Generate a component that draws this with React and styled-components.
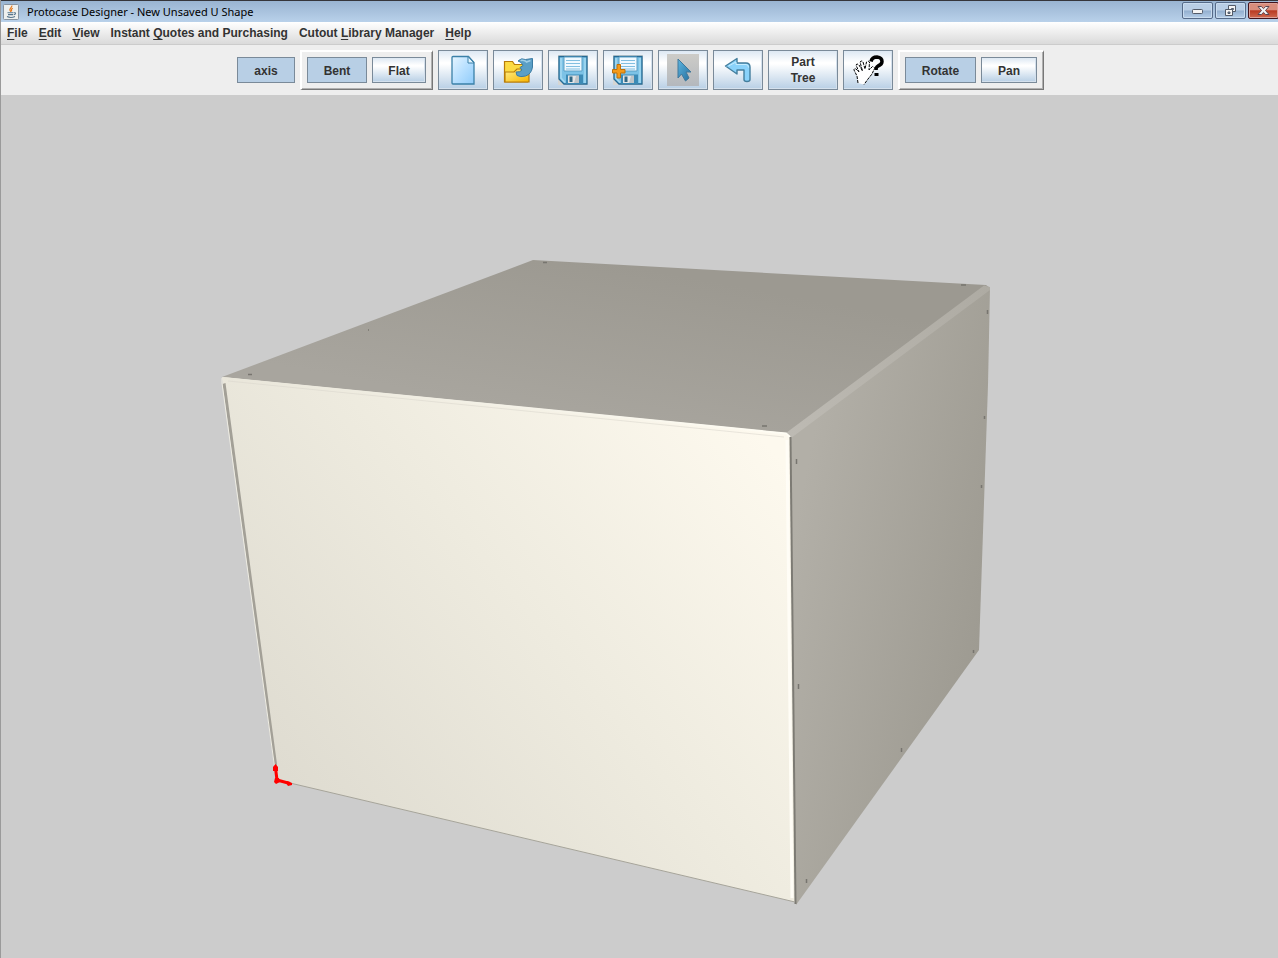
import React, { useState } from "react";
import styled, { createGlobalStyle, css } from "styled-components";

const GlobalStyle = createGlobalStyle`
  * { box-sizing: border-box; }
  html, body { margin: 0; padding: 0; }
  body { background: #cccccc; font-family: "Liberation Sans", Arial, sans-serif; }
`;

const Window = styled.div`
  display: flex;
  flex-direction: column;
  min-height: 100vh;
  border-left: 1px solid #9a9a9a;
  overflow: hidden;
`;

const TitleBar = styled.header`
  display: flex;
  align-items: center;
  height: 22px;
  padding-left: 2px;
  border-top: 1px solid #35353a;
  background: linear-gradient(#99b4d1, #b9d1ea);
`;

const Title = styled.h1`
  flex: 1;
  margin: 0 0 0 8px;
  font: 400 11px/20px "Noto Sans", sans-serif;
  color: #000;
  white-space: nowrap;
`;

const WindowControls = styled.div`
  display: flex;
  align-self: flex-start;
  gap: 2px;
  padding-top: 1px;
  margin-right: -1px;
`;

const WindowButton = styled.button`
  display: flex;
  align-items: center;
  justify-content: center;
  width: 31px;
  height: 17px;
  padding: 0;
  border: 1px solid #566b89;
  border-radius: 2px;
  box-shadow: inset 0 0 0 1px #c9dcef;
  background: linear-gradient(#b9cee5 48%, #93afcf 52%, #b4cde7);
  ${(p) => p.$close && css`
    border-color: #43141c;
    box-shadow: inset 0 0 0 1px #dda298;
    background: linear-gradient(#d98d7c 45%, #b93a22 52%, #cf6a50);
  `}
`;

const MenuBar = styled.nav`
  display: flex;
  align-items: center;
  gap: 11px;
  height: 23px;
  padding-left: 6px;
  border-bottom: 1px solid #cccccc;
  background: linear-gradient(#ffffff, #dadada);
`;

const MenuItem = styled.button`
  padding: 0;
  border: 0;
  background: none;
  font: 700 12px/20px "Liberation Sans", Arial, sans-serif;
  color: #333;
  white-space: nowrap;
`;

const Mnemonic = styled.span`
  text-decoration: underline;
  text-underline-offset: 2px;
`;

const Toolbar = styled.div`
  display: flex;
  align-items: center;
  justify-content: center;
  gap: 5px;
  height: 50px;
  padding-left: 2px;
  background: #eeeeee;
`;

const ToolButton = styled.button`
  display: flex;
  align-items: center;
  justify-content: center;
  width: ${(p) => p.$width || 50}px;
  height: ${(p) => (p.$small ? 26 : 40)}px;
  padding: ${(p) => (p.$small ? 2 : 0)}px 0 0;
  border: 1px solid #7a8a99;
  background: ${(p) =>
    p.$active ? "#b8cfe5" : "linear-gradient(#dde8f3, #ffffff 30%, #ffffff 34%, #b8cfe5)"};
  box-shadow: ${(p) => (p.$active ? "none" : "inset -1px -1px 0 #d5e1ed")};
  font: 700 12px/16px "Liberation Sans", Arial, sans-serif;
  color: #333;
`;

const ButtonGroup = styled.div`
  display: flex;
  align-items: center;
  gap: 5px;
  height: 40px;
  padding: 0 6px 1px 5px;
  border-style: solid;
  border-width: 2px 1px 1px 2px;
  border-color: #ffffff #777777 #777777 #ffffff;
  box-shadow: inset -1px -1px 0 #b0b0b0;
`;

const Viewport = styled.main`
  flex: 1;
  display: flex;
  background: #cccccc;
`;

const Scene = styled.svg`
  display: block;
  flex: 1;
  width: 100%;
`;

const JavaIcon = () => (
  <svg width="16" height="16" viewBox="0 0 16 16" aria-hidden="true">
    <rect x=".5" y=".5" width="15" height="15" rx="1" fill="#eef0ef" stroke="#8793a0" />
    <path d="M8.8 1.5c.6 2-2.6 2.7-1.9 4.6.2.7.9 1.2 1 1.9M9.8 4.2C8 5.1 8.2 6 8.8 7.2" fill="none" stroke="#e67b20" strokeWidth="1.2" />
    <path d="M4.5 8.7h6M5 10.6h5M4 12.6c2 .9 6 .8 8-.1M11 8.8c2-.5 2 1.5-.3 2" fill="none" stroke="#57758d" strokeWidth="1.1" />
  </svg>
);

const MinimizeIcon = () => (
  <svg width="12" height="9" viewBox="0 0 12 9" aria-hidden="true">
    <rect x=".5" y="3.5" width="10" height="4" rx=".8" fill="#f4f4f4" stroke="#535b69" />
  </svg>
);

const RestoreIcon = () => (
  <svg width="13" height="12" viewBox="0 0 13 12" aria-hidden="true">
    <path d="M4.500.500h7v6h-7z" fill="#f4f4f4" stroke="#535b69" />
    <path d="M7.500 3.500h2v1h-2z" fill="#7f9bb9" stroke="#535b69" />
    <path d="M1.500 4.500h7v6h-7z" fill="#f4f4f4" stroke="#535b69" />
    <path d="M4 7h2v1.500H4z" fill="#7f9bb9" stroke="#535b69" />
  </svg>
);

const CloseIcon = () => (
  <svg width="13" height="11" viewBox="0 0 13 11" aria-hidden="true">
    <path d="M1 1.500h3.300L6.500 3.600 8.700 1.500H12L8.500 5.500 12 9.500H8.700L6.500 7.400 4.300 9.500H1L4.500 5.500z" fill="#f4f4f4" stroke="#594550" strokeLinejoin="round" />
  </svg>
);

const NewIcon = () => (
  <svg width="32" height="32" viewBox="0 0 32 32" aria-hidden="true">
    <defs>
      <linearGradient id="sheet" x1="0" y1="0" x2="1" y2="1">
        <stop offset="0" stopColor="#e6f5ff" />
        <stop offset=".5" stopColor="#b8e0ff" />
        <stop offset="1" stopColor="#8fcbfa" />
      </linearGradient>
    </defs>
    <path d="M6 2.500h15.500l5.500 6V30H6q-1 0-1-1V3.500q0-1 1-1z" fill="url(#sheet)" stroke="#3a80a8" strokeWidth="1.300" />
    <path d="M21 2.500V9h6z" fill="#e4f5ff" stroke="#3a80a8" />
  </svg>
);

const OpenIcon = () => (
  <svg width="32" height="32" viewBox="0 0 32 32" aria-hidden="true">
    <defs>
      <linearGradient id="folder" x1="0" y1="0" x2="1" y2="1">
        <stop offset="0" stopColor="#fff08a" />
        <stop offset="1" stopColor="#f9b500" />
      </linearGradient>
    </defs>
    <path d="M2.500 28V7.500h8l2 3h13V28z" fill="#fddb42" stroke="#b87c08" strokeWidth="1.200" />
    <path d="M3 28V18h9l3-3h12v13z" fill="url(#folder)" stroke="#b87c08" strokeWidth="1.200" />
    <path d="M16 7q3-3.500 7.500-1.500L30.500 4.500V13q-1 7-7 9-5 1.500-8.500-.5l-1-3.500q4 .5 6-2L18 13.500l3-2q-1-3.500-5-4.500z" fill="#5b9fc6" stroke="#3b7ba3" strokeLinejoin="round" />
    <path d="M18.500 6.500q4-1 6 1.500l4-1.500" fill="none" stroke="#9fcee6" strokeWidth="1.500" />
  </svg>
);

const SaveIcon = ({ plus }) => (
  <svg width="32" height="32" viewBox="0 0 32 32" aria-hidden="true">
    <path d="M1 1h30v30H1z" fill="#d6d6d3" />
    <path d="M2 2.500h28V30H7l-5-5z" fill="#7cc2e6" stroke="#246a95" strokeWidth="1.300" />
    <path d="M4 4v20l4 4.500" fill="none" stroke="#a6daf2" strokeWidth="1.500" />
    <path d="M28 4v25" stroke="#a2d8f0" strokeWidth="1.500" />
    <path d="M7 3h18v14H7z" fill="#f0f9ff" stroke="#5a9fc4" />
    <path d="M9 6.500h14M9 9.500h14M9 12.500h14M9 15h14" stroke="#82bfe0" />
    <path d="M9 20.500h17V30H9z" fill="#3c8ab5" />
    <path d="M11 21.500h11V29H11z" fill="#e2e5e7" />
    <path d="M12.500 22.500h3V28h-3z" fill="#316783" />
    <path d="M19 22h3v7h-5z" fill="#bec4c8" />
    {plus && <path d="M5 10.500h3.500v5H13v3.500H8.500v5H5v-5H.5v-3.500H5z" fill="#f49a19" stroke="#be7108" />}
  </svg>
);

const SelectIcon = () => (
  <svg width="32" height="32" viewBox="0 0 32 32" aria-hidden="true">
    <defs>
      <linearGradient id="selectTile" x1="0" y1="0" x2="0" y2="1">
        <stop offset="0" stopColor="#cdccc8" />
        <stop offset="1" stopColor="#b4b8bd" />
      </linearGradient>
      <linearGradient id="pointer" x1="0" y1="0" x2="1" y2="1">
        <stop offset="0" stopColor="#5eb5e0" />
        <stop offset="1" stopColor="#246f9e" />
      </linearGradient>
    </defs>
    <path d="M0 0h32v32H0z" fill="url(#selectTile)" />
    <path d="M11 5l13 13h-5l3 6-3.500 3-4-7-3.500 4z" fill="url(#pointer)" stroke="#40789b" />
  </svg>
);

const UndoIcon = () => (
  <svg width="32" height="32" viewBox="0 0 32 32" aria-hidden="true">
    <path d="M3.500 12L15 4.500V9h9q4 0 4 4v12.500q0 2-3 2t-3-2V16h-7v4z" fill="#8ad2fa" stroke="#447e9d" strokeWidth="1.400" strokeLinejoin="round" />
    <path d="M6.500 12L14 8v2.500h10q2.500 0 2.500 3" fill="none" stroke="#c6edff" />
  </svg>
);

const HelpHandIcon = () => (
  <svg width="34" height="32" viewBox="0 0 34 32" aria-hidden="true">
    <path d="M20 7.500q1-4.500 6-4.500 5 .5 5 4.500 0 3-4 4.500-2 1-2 4" fill="none" stroke="#000" strokeWidth="3.500" />
    <path d="M23.500 19h4v3h-4z" fill="#000" />
    <path d="M7 29l-1-7-3-6q0-2 2-1l3 3-3-7q1-2 3 0l3.500 6L9 8q2-2 3 0l2 7 1.500-7q2-1.500 3 0L18 16l3.500-3.500q2 0 2 2L21 20l-4 5-4 5.500z" fill="#fff" />
    <path d="M7 29l-1-7-3-6q0-2 2-1l3 3-3-7q1-2 3 0l3.500 6L9 8q2-2 3 0l2 7 1.500-7q2-1.500 3 0L18 16l3.500-3.500q2 0 2 2L21 20l-4 5-4 5.500" fill="none" stroke="#000" strokeDasharray="3 1" />
  </svg>
);

const Enclosure = () => (
  <Scene viewBox="1 95 1277 863" preserveAspectRatio="xMidYMid meet" role="img" aria-label="U shape enclosure">
    <defs>
      <linearGradient id="topFace" x1="600" y1="260" x2="570" y2="420" gradientUnits="userSpaceOnUse">
        <stop offset="0" stopColor="#9c9991" />
        <stop offset="1" stopColor="#a8a59e" />
      </linearGradient>
      <linearGradient id="frontFace" x1="290" y1="780" x2="740" y2="410" gradientUnits="userSpaceOnUse">
        <stop offset="0" stopColor="#dfdcd1" />
        <stop offset=".5" stopColor="#eeebdf" />
        <stop offset="1" stopColor="#fdf9ee" />
      </linearGradient>
      <linearGradient id="sideFace" x1="790" y1="550" x2="990" y2="590" gradientUnits="userSpaceOnUse">
        <stop offset="0" stopColor="#b2afa7" />
        <stop offset="1" stopColor="#9e9b92" />
      </linearGradient>
      <linearGradient id="bendEdge" x1="790" y1="435" x2="990" y2="288" gradientUnits="userSpaceOnUse">
        <stop offset="0" stopColor="#bdbab3" />
        <stop offset="1" stopColor="#aeaba3" />
      </linearGradient>
      <linearGradient id="frontLip" x1="222" y1="0" x2="790" y2="0" gradientUnits="userSpaceOnUse">
        <stop offset="0" stopColor="#e9e6da" />
        <stop offset="1" stopColor="#fffdf4" />
      </linearGradient>
    </defs>
    <path d="M222 377L533 260 986 285 990 288 790 436z" fill="url(#topFace)" />
    <path d="M789 435L990 288 988 385 979 650 796 905z" fill="url(#sideFace)" />
    <path d="M786 433L984 285.500 990 287 990 290 791 438z" fill="url(#bendEdge)" />
    <path d="M222 377L786 433 790 437 795 902 277 780z" fill="url(#frontFace)" />
    <path d="M223 378L786 433.500 790 437" fill="none" stroke="url(#frontLip)" strokeWidth="2" />
    <path d="M228 381L784 437" fill="none" stroke="#d9d6cc" strokeOpacity=".55" />
    <path d="M787 440L792 898" fill="none" stroke="#fffdf6" strokeWidth="3" />
    <path d="M222.500 384L225.500 383 277 764 276 780 274 764z" fill="#a3a097" />
    <path d="M222 378L222 383 275 770" fill="none" stroke="#eeece2" />
    <path d="M790.500 437L795.500 904" fill="none" stroke="#7d7b74" strokeWidth="2" />
    <path d="M290 783L795 902" fill="none" stroke="#a6a49a" />
    <path d="M248 374.500h4M762 426h5M543 262.500h4M961 285h5M368 330h1M796.500 459v5M798.500 684v5M806.500 879v4M987.500 310v4M984.500 416v3M981.500 485v3M973.500 650v3M901.500 748v4" fill="none" stroke="#77756f" strokeWidth="1.500" />
    <path d="M275.500 768L277 780 290 783.500" fill="none" stroke="#f00" strokeWidth="3" />
    <path d="M275.500 764l2.500 3v4h-5v-4zM275 778h4l1 4-4 2-2-2zM287 781l5 2v2l-4 1-2-3z" fill="#f00" />
  </Scene>
);

const menus = [
  ["", "F", "ile"],
  ["", "E", "dit"],
  ["", "V", "iew"],
  ["Instant ", "Q", "uotes and Purchasing"],
  ["Cutout ", "L", "ibrary Manager"],
  ["", "H", "elp"],
];

export default function App() {
  const [axis, setAxis] = useState(true);
  const [shape, setShape] = useState("Bent");
  const [mode, setMode] = useState("Rotate");

  return (
    <Window>
      <GlobalStyle />
      <TitleBar>
        <JavaIcon />
        <Title>Protocase Designer - New Unsaved U Shape</Title>
        <WindowControls>
          <WindowButton aria-label="Minimize"><MinimizeIcon /></WindowButton>
          <WindowButton aria-label="Restore"><RestoreIcon /></WindowButton>
          <WindowButton $close aria-label="Close"><CloseIcon /></WindowButton>
        </WindowControls>
      </TitleBar>
      <MenuBar>
        {menus.map(([before, key, after]) => (
          <MenuItem key={before + key}>{before}<Mnemonic>{key}</Mnemonic>{after}</MenuItem>
        ))}
      </MenuBar>
      <Toolbar role="toolbar">
        <ToolButton $small $width={58} $active={axis} onClick={() => setAxis(!axis)}>axis</ToolButton>
        <ButtonGroup>
          <ToolButton $small $width={60} $active={shape === "Bent"} onClick={() => setShape("Bent")}>Bent</ToolButton>
          <ToolButton $small $width={54} $active={shape === "Flat"} onClick={() => setShape("Flat")}>Flat</ToolButton>
        </ButtonGroup>
        <ToolButton aria-label="New"><NewIcon /></ToolButton>
        <ToolButton aria-label="Open"><OpenIcon /></ToolButton>
        <ToolButton aria-label="Save"><SaveIcon /></ToolButton>
        <ToolButton aria-label="Save as"><SaveIcon plus /></ToolButton>
        <ToolButton aria-label="Select"><SelectIcon /></ToolButton>
        <ToolButton aria-label="Undo"><UndoIcon /></ToolButton>
        <ToolButton $width={70}>Part<br />Tree</ToolButton>
        <ToolButton aria-label="Help"><HelpHandIcon /></ToolButton>
        <ButtonGroup>
          <ToolButton $small $width={71} $active={mode === "Rotate"} onClick={() => setMode("Rotate")}>Rotate</ToolButton>
          <ToolButton $small $width={56} $active={mode === "Pan"} onClick={() => setMode("Pan")}>Pan</ToolButton>
        </ButtonGroup>
      </Toolbar>
      <Viewport><Enclosure /></Viewport>
    </Window>
  );
}
